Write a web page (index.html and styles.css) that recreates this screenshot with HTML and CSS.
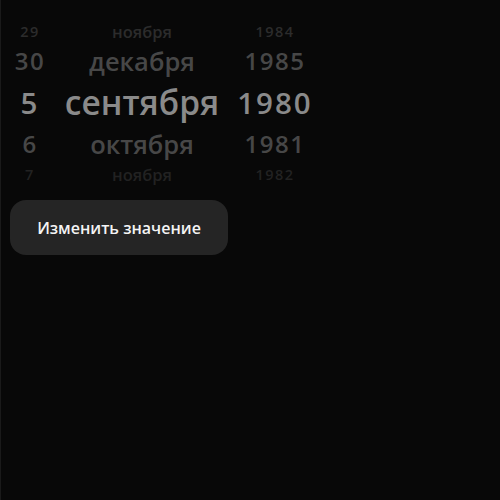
FILE: index.html
```html
<!DOCTYPE html>
<html lang="ru">
<head>
<meta charset="utf-8">
<link rel="stylesheet" href="styles.css">
</head>
<body>
<div class="page">
  <div class="picker">
    <div class="row r-far r-first">
      <span class="day">29</span><span class="month">ноября</span><span class="year">1984</span>
    </div>
    <div class="row r-near r-up">
      <span class="day">30</span><span class="month">декабря</span><span class="year">1985</span>
    </div>
    <div class="row r-sel">
      <span class="day">5</span><span class="month">сентября</span><span class="year">1980</span>
    </div>
    <div class="row r-near r-down">
      <span class="day">6</span><span class="month">октября</span><span class="year">1981</span>
    </div>
    <div class="row r-far r-last">
      <span class="day">7</span><span class="month">ноября</span><span class="year">1982</span>
    </div>
  </div>
  <button class="btn">Изменить значение</button>
</div>
</body>
</html>
```
FILE: styles.css
```css
html, body {
  margin: 0;
  padding: 0;
  background: #080808;
  height: 100%;
}
body {
  font-family: "Open Sans", "Noto Sans", sans-serif;
  border-left: 1px solid #1a1a1a;
  box-sizing: border-box;
}
.page {
  padding: 20px 0 0 9px;
  display: flex;
  flex-direction: column;
  align-items: flex-start;
}
.picker {
  display: flex;
  flex-direction: column;
}
.row {
  display: flex;
  align-items: center;
  font-weight: 600;
}
.row span {
  text-align: center;
  white-space: nowrap;
}
.day { width: 40px; }
.month { width: 184px; }
.year { width: 82px; }

.r-far { font-size: 14.5px; color: #2c2c2c; }
.r-far .day, .r-far .year { letter-spacing: 1.5px; }
.r-far .month { font-size: 16.5px; }
.r-first { height: 22px; }
.r-last { height: 25px; color: #222222; }

.r-near { font-size: 24px; color: #474747; }
.r-near .day, .r-near .year { letter-spacing: 1.5px; }
.r-near .month { font-size: 25.5px; }
.r-up { height: 37px; }
.r-down { height: 37px; }

.r-sel { height: 46px; font-size: 29.5px; color: #8a8a8a; }
.r-sel .day, .r-sel .year { letter-spacing: 2px; }
.r-sel .month { font-size: 33.5px; }

.btn {
  margin-top: 13px;
  width: 218px;
  height: 55px;
  border: none;
  border-radius: 16px;
  background: #252525;
  color: #f4f4f4;
  font-family: "Open Sans", "Noto Sans", sans-serif;
  font-weight: 600;
  font-size: 16px;
  padding: 0;
}
```
